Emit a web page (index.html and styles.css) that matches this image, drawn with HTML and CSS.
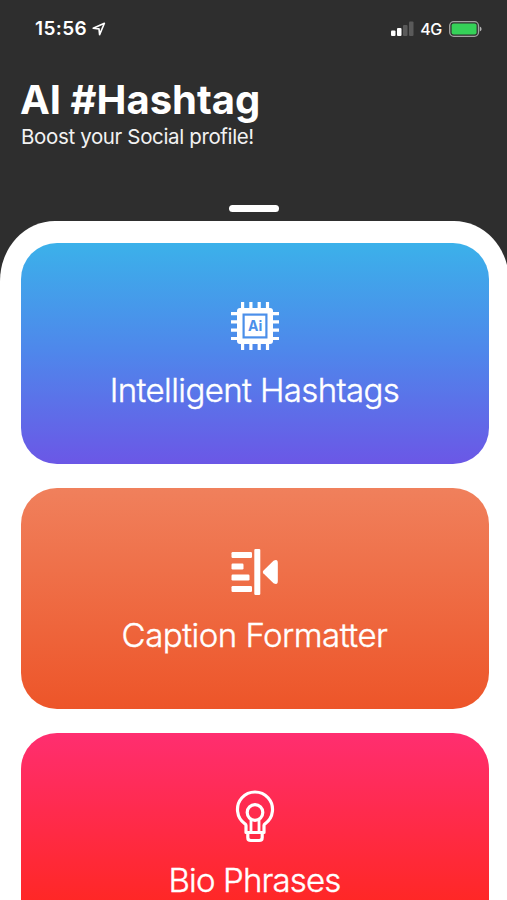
FILE: index.html
```html
<!DOCTYPE html>
<html lang="en">
<head>
    <meta charset="UTF-8">
    <meta name="viewport" content="width=device-width, initial-scale=1.0">
    <title>AI #Hashtag</title>
    <link rel="stylesheet" href="styles.css">
</head>

<body>

    <div class="status-bar">
        <div class="status-left">
            <span class="time">15:56</span>
            <svg class="location" width="14" height="14" viewBox="0 0 14 14">
                <path d="M1.2 6.3 L12.4 1.3 L7.6 12.6 L7 6.9 Z" fill="none" stroke="#fff" stroke-width="1.6" stroke-linejoin="round"/>
            </svg>
        </div>
        <div class="status-right">
            <svg class="signal" width="23" height="15" viewBox="0 0 23 15">
                <rect x="0" y="9.5" width="4.5" height="5.5" rx="1" fill="#fff"/>
                <rect x="6" y="7" width="4.5" height="8" rx="1" fill="#fff"/>
                <rect x="12" y="4" width="4.5" height="11" rx="1" fill="#5a5a5a"/>
                <rect x="18" y="0.5" width="4.5" height="14.5" rx="1" fill="#5a5a5a"/>
            </svg>
            <span class="network">4G</span>
            <svg class="battery" width="33" height="16" viewBox="0 0 33 16">
                <rect x="0.7" y="0.7" width="28.8" height="14.6" rx="4" fill="none" stroke="#a3a3a3" stroke-width="1.3"/>
                <rect x="2.6" y="2.6" width="25" height="10.8" rx="2" fill="#35d158"/>
                <path d="M30.8 5.5 Q32.6 6.3 32.6 8 Q32.6 9.7 30.8 10.5 Z" fill="#b5b5b5"/>
            </svg>
        </div>
    </div>

    <header class="header">
        <h1 class="title">AI #Hashtag</h1>
        <p class="subtitle">Boost your Social profile!</p>
    </header>

    <div class="handle"></div>

    <main class="sheet">
        <div class="card card-hashtags">
            <svg class="icon" width="48" height="48" viewBox="0 0 48 48">
                <!-- chip pins -->
                <path d="M11.6 0V48 M19.9 0V48 M28.2 0V48 M36.5 0V48 M0 11.6H48 M0 19.9H48 M0 28.2H48 M0 36.5H48" stroke="#fff" stroke-width="3.2"/>
                <rect x="6" y="6" width="36" height="36" rx="3" fill="#fff"/>
                <rect x="12.6" y="12.6" width="22.8" height="22.8" fill="none" stroke="#4b8fea" stroke-width="2.2"/>
                <text class="chip-text" x="24.2" y="29.2" text-anchor="middle">Ai</text>
            </svg>
            <h2 class="card-name name-hashtags">Intelligent Hashtags</h2>
        </div>

        <div class="card card-caption">
            <svg class="icon" width="48" height="48" viewBox="0 0 48 48" fill="#fff">
                <rect x="0.5" y="5" width="20.5" height="6" rx="1.2"/>
                <rect x="0.5" y="16.5" width="12" height="6" rx="1.2"/>
                <rect x="0.5" y="27.5" width="18" height="6" rx="1.2"/>
                <rect x="0.5" y="39" width="20.5" height="6" rx="1.2"/>
                <rect x="23.3" y="1.9" width="6" height="46" rx="1.2"/>
                <path d="M32.3 23.7 L42.5 13.8 Q46.8 11.5 46.8 16 V34 Q46.8 38.5 42.5 36.2 L32.3 26.3 Q31.2 25 32.3 23.7 Z"/>
            </svg>
            <h2 class="card-name name-caption">Caption Formatter</h2>
        </div>

        <div class="card card-bio">
            <svg class="icon icon-bulb" width="40" height="54" viewBox="0 0 40 54" fill="none" stroke="#fff" stroke-width="3.2" stroke-linejoin="round">
                <path d="M11 43.5 V36.5 Q11 35.5 9.8 34.7 A17.5 17.5 0 1 1 30.2 34.7 Q29 35.5 29 36.5 V43.5 Z"/>
                <circle cx="20" cy="23.5" r="7.8"/>
                <path d="M16 31 V43 M24 31 V43" stroke-width="2.8"/>
                <path d="M12.8 43.5 V48.5 Q12.8 51.5 15.8 51.5 H24.2 Q27.2 51.5 27.2 48.5 V43.5"/>
            </svg>
            <h2 class="card-name name-bio">Bio Phrases</h2>
        </div>
    </main>

</body>
</html>
```
FILE: styles.css
```css
* {
    box-sizing: border-box;
}

body {
    margin: 0;
    height: 900px;
    overflow: hidden;
    background-color: #2e2e2e;
    color: white;
    font-family: Inter, "Liberation Sans", sans-serif;
}

/* Phone status bar */
.status-bar {
    display: flex;
    justify-content: space-between;
    align-items: center;
    height: 57px;
    padding: 0 25px 0 35px;
}

.status-left, .status-right {
    display: flex;
    align-items: center;
}

.time {
    font-size: 19px;
    font-weight: 600;
    letter-spacing: 0.4px;
}

.location {
    margin-left: 5px;
}

.network {
    margin: 0 7px 0 6px;
    font-size: 16px;
    font-weight: 500;
    letter-spacing: -0.3px;
}

/* Title area */
.header {
    height: 148px;
    padding: 18px 21px 0;
}

.title {
    margin: 0;
    margin-left: -1px;
    font-size: 40px;
    line-height: 50px;
    font-weight: 700;
}

.subtitle {
    margin: 0;
    color: #f2f2f2;
    font-size: 20.5px;
    line-height: 24px;
    letter-spacing: -0.36px;
}

.handle {
    width: 50px;
    height: 7px;
    margin: 0 auto;
    border-radius: 4px;
    background-color: white;
}

/* White sheet with the cards */
.sheet {
    display: flex;
    flex-direction: column;
    gap: 24.5px;
    height: 679px;
    margin: 9px -2px 0 0;
    padding: 22px 20.5px 0 20.5px;
    border-radius: 55px 55px 0 0 / 60px 60px 0 0;
    background-color: white;
    overflow: hidden;
}

.card {
    display: flex;
    flex-direction: column;
    flex-shrink: 0;
    align-items: center;
    height: 220.5px;
    padding-top: 59px;
    border-radius: 36px;
}

.card-hashtags {
    background: linear-gradient(#3bb1ea, #4f86eb 50%, #6b57e6);
}

.card-caption {
    background: linear-gradient(#f0805c, #ed5529);
}

.card-bio {
    background: linear-gradient(#ff2e70, #ff2722 80%, #ff2418);
}

.icon-bulb {
    margin: -3px 0;
}

.card-name {
    margin: 20px 0 0;
    font-size: 33px;
    line-height: 41px;
    font-weight: 300;
    -webkit-text-stroke: 0.4px white; /* a bit heavier than light */
    white-space: nowrap;
}

.name-hashtags {
    letter-spacing: -0.6px;
}

.name-caption {
    letter-spacing: -0.5px;
}

.name-bio {
    letter-spacing: -0.85px;
}

.chip-text {
    font-size: 14px;
    font-weight: 700;
    fill: #4b8fea;
}
```
